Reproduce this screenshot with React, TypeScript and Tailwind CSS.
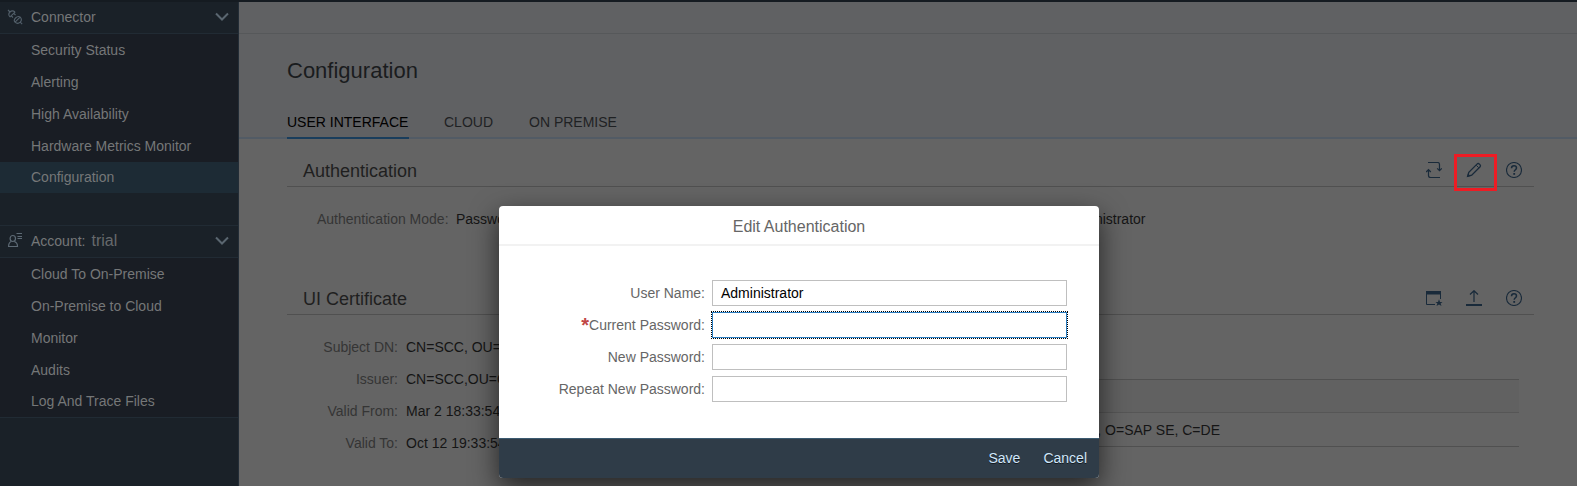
import React from "react";

function Chevron() {
  return (
    <svg width="14" height="10" viewBox="0 0 14 10" className="shrink-0" fill="none" stroke="#5a6670" strokeWidth="2">
      <path d="M1 1.500 L7 7.500 L13 1.500" />
    </svg>
  );
}

function PlugIcon() {
  return (
    <svg width="16" height="16" viewBox="0 0 16 16" className="shrink-0" fill="none" stroke="#53606b" strokeWidth="1.1">
      <path d="M1 1 L3 3 M2.800 8.200 L8.200 2.800 M3 8 C1.500 6.300 1.600 4.300 3 3 C4.300 1.700 6.300 1.600 8 3 M4.300 6.800 L6 8.500 M6.800 4.300 L8.500 6" />
      <path d="M15.200 15.200 L13.200 13.200 M7.800 13.400 L13.400 7.800 M8 13.200 C9.700 14.700 11.800 14.500 13.200 13.200 C14.500 11.800 14.700 9.700 13.200 8 M8 13.200 C6.800 11.800 7 10.500 8.500 9 C10 7.500 11.500 6.900 13.200 8" />
    </svg>
  );
}

function AccountIcon() {
  return (
    <svg width="16" height="16" viewBox="0 0 16 16" className="shrink-0" fill="none" stroke="#5d6a75" strokeWidth="1.2">
      <ellipse cx="5.800" cy="5.500" rx="2.700" ry="3" />
      <path d="M4.300 8.500 C2 9.300 1.600 10.800 1.600 13.500 H10.500 C10.500 10.800 9.600 9.300 7.300 8.500" />
      <path d="M9.500 .5 H15 M10.500 3.500 H15 M10.500 5.500 H15" strokeWidth="1" />
    </svg>
  );
}

function SyncIcon() {
  return (
    <svg width="16" height="16" viewBox="0 0 16 16" fill="none" stroke="#192a3a" strokeWidth="1.2">
      <path d="M2 .5 H11.500 Q13.500 .5 13.500 2.500 V8.500 M11.200 6.300 L13.500 8.700 L15.800 6.300" />
      <path d="M14 15.500 H4.500 Q2.500 15.500 2.500 13.500 V7.800 M.2 10 L2.500 7.600 L4.800 10" />
    </svg>
  );
}

function PencilIcon() {
  return (
    <svg width="16" height="16" viewBox="0 0 16 16" fill="none" stroke="#192a3a" strokeWidth="1.300">
      <path d="M1.600 14.400 L2.800 10.300 L11 2.100 Q12.200 .9 13.400 2.100 L13.900 2.600 Q15.100 3.800 13.900 5 L5.700 13.200 Z" />
      <path d="M10.300 3.300 L12.700 5.700" strokeWidth="1" />
      <path d="M1 15 L2 11.500 L4.500 14 Z" fill="#192a3a" stroke="none" />
    </svg>
  );
}

function HelpIcon() {
  return (
    <svg width="16" height="16" viewBox="0 0 16 16" fill="none" stroke="#192a3a">
      <circle cx="8" cy="8" r="7.500" strokeWidth="1.100" />
      <path d="M5.500 6.200 C5.500 4.600 6.500 3.700 8 3.700 C9.500 3.700 10.500 4.600 10.500 5.900 C10.500 7.800 8.200 7.700 8.200 9.800" strokeWidth="1.500" />
      <rect x="7.300" y="11" width="1.800" height="1.800" fill="#192a3a" stroke="none" />
    </svg>
  );
}

function WindowStarIcon() {
  return (
    <svg width="16" height="16" viewBox="0 0 16 16" fill="none" stroke="#192a3a" className="overflow-visible">
      <path d="M.5 1 V14.500 H9 M14.500 1 V9" />
      <path d="M0 1 H15 V4.500 H0 Z" fill="#192a3a" stroke="none" />
      <path d="M13 9.300 L14 12 H16.500 L14.600 13.500 L15.500 16 L13 14.600 L10.500 16 L11.400 13.500 L9.500 12 H12 Z" fill="#192a3a" stroke="none" />
    </svg>
  );
}

function UploadIcon() {
  return (
    <svg width="16" height="16" viewBox="0 0 16 16" fill="none" stroke="#192a3a">
      <path d="M8 12 V1 M4 4.500 L8 .7 L12 4.500" strokeWidth="1.200" />
      <path d="M0 14 H16 V16 H0 Z" fill="#192a3a" stroke="none" />
    </svg>
  );
}

function NavHeader({ icon, children }: { icon: React.ReactNode; children: React.ReactNode }) {
  return (
    <div className="flex h-8 items-center border-b border-[#212b34] bg-[#1a2128] pb-px pl-[7px] pr-[9px] text-[#757778]">
      {icon}
      <div className="ml-2 flex flex-1 items-baseline">{children}</div>
      <Chevron />
    </div>
  );
}

function NavItem({ label, last, active }: { label: string; last?: boolean; active?: boolean }) {
  return (
    <div className={`flex items-center pl-[31px] ${last ? "h-[31px] pb-[2px]" : "h-8"} ${active ? "bg-[#1d2b35]" : "bg-[#191d24]"}`}>
      {label}
    </div>
  );
}

function Section({ title, children }: { title: string; children: React.ReactNode }) {
  return (
    <div className="ml-12 mr-[43px] flex h-12 items-start justify-between border-b border-[#505050] pl-4 pr-3">
      <h2 className="pt-5 text-[18px] leading-6 text-[#1f1f1f]">{title}</h2>
      <div className="flex gap-6 pt-[23px]">{children}</div>
    </div>
  );
}

function CertRow({ label, value }: { label: string; value: string }) {
  return (
    <div className="flex h-8 items-center">
      <span className="w-[159px] text-right text-[#353535]">{label}</span>
      <span className="ml-2 whitespace-nowrap text-[#151515]">{value}</span>
    </div>
  );
}

function Field({ label, value, required, focused }: { label: string; value?: string; required?: boolean; focused?: boolean }) {
  return (
    <div className="flex h-[26px] items-center">
      <label className="flex w-[206px] items-center justify-end text-[#666666]">
        {required && <span className="h-[22px] text-[20px] font-bold leading-[22px] text-[#c14646]">*</span>}
        {label}
      </label>
      <div
        className={`ml-[7px] flex h-[26px] w-[355px] items-center border bg-white pl-2 text-black ${
          focused ? "border-[#2a7dc0] outline outline-1 outline-dotted outline-black" : "border-[#bfbfbf]"
        }`}
      >
        {value}
      </div>
    </div>
  );
}

export default function App() {
  return (
    <div className="relative flex h-[486px] w-[1577px] flex-col overflow-hidden bg-[#646464] font-['Liberation_Sans',Arial,sans-serif] text-[14px] leading-4">
      <div className="h-[2px] shrink-0 bg-[#151b21]" />
      <div className="flex flex-1">
        <aside className="w-[239px] shrink-0 border-r border-[#232d37] bg-[#1a2128] text-[#757778]">
          <NavHeader icon={<PlugIcon />}>Connector</NavHeader>
          <NavItem label="Security Status" />
          <NavItem label="Alerting" />
          <NavItem label="High Availability" />
          <NavItem label="Hardware Metrics Monitor" />
          <NavItem label="Configuration" last active />
          <div className="h-[33px] border-b border-[#212b34]" />
          <NavHeader icon={<AccountIcon />}>
            Account:<span className="ml-[6px] text-[16px] text-[#66696c]">trial</span>
          </NavHeader>
          <NavItem label="Cloud To On-Premise" />
          <NavItem label="On-Premise to Cloud" />
          <NavItem label="Monitor" />
          <NavItem label="Audits" />
          <NavItem label="Log And Trace Files" last />
          <div className="border-b border-[#212b34]" />
        </aside>

        <main className="flex-1">
          <div className="bg-[#606163]">
            <div className="h-8 border-b border-[#56585a]" />
            <h1 className="h-[72px] pl-12 pt-6 text-[22px] leading-[26px] text-[#1a1c1e]">Configuration</h1>
            <nav className="flex h-[33px] border-b-2 border-[#525b65] pl-12 text-[#1f2123]">
              <span className="mr-[35px] h-[33px] w-[122px] border-b-2 border-[#193d5c] pt-2 text-black">USER INTERFACE</span>
              <span className="mr-9 pt-2">CLOUD</span>
              <span className="pt-2">ON PREMISE</span>
            </nav>
          </div>

          <Section title="Authentication">
            <SyncIcon />
            <span className="relative">
              <PencilIcon />
              <span className="absolute -left-3 -top-2 h-[37px] w-[43px] border-[3px] border-[#ed1c24]" />
            </span>
            <HelpIcon />
          </Section>
          <div className="flex h-20 pl-[78px] pt-6 text-[#151515]">
            <span className="w-[139px] text-[#353535]">Authentication Mode:</span>
            <span className="w-[607px]">Password</span>
            <span>Administrator</span>
          </div>

          <Section title="UI Certificate">
            <WindowStarIcon />
            <UploadIcon />
            <HelpIcon />
          </Section>
          <div className="flex pt-4">
            <div className="w-[560px] shrink-0">
              <CertRow label="Subject DN:" value="CN=SCC, OU=Connector" />
              <CertRow label="Issuer:" value="CN=SCC,OU=Connector" />
              <CertRow label="Valid From:" value="Mar 2 18:33:54 2017" />
              <CertRow label="Valid To:" value="Oct 12 19:33:54 2017" />
            </div>
            <div className="mt-12 h-[68px] w-[720px] border-y border-[#505050]">
              <div className="h-[33px] border-b border-[#565656] bg-[#616161]" />
              <div className="flex h-[33px] items-center justify-end pr-[299px] text-[#151515]">OU=Connector, O=SAP SE, C=DE</div>
            </div>
          </div>
        </main>
      </div>

      <div
        role="dialog"
        className="absolute left-[499px] top-[206px] flex h-[272px] w-[600px] flex-col overflow-hidden rounded bg-white shadow-[0_10px_28px_rgba(0,0,0,0.65)]"
      >
        <div className="flex h-10 items-center justify-center border-b-2 border-[#f2f2f2] pt-[4px] text-[16px] text-[#666666]">
          Edit Authentication
        </div>
        <div className="flex flex-1 flex-col gap-[6px] pt-[34px]">
          <Field label="User Name:" value="Administrator" />
          <Field label="Current Password:" required focused />
          <Field label="New Password:" />
          <Field label="Repeat New Password:" />
        </div>
        <div className="flex h-10 items-center justify-end gap-[23px] border-t border-[#3b5a70] bg-[#2f3c48] pb-[2px] pr-3 text-[#d0e6fa] [text-shadow:0_1px_0_rgba(0,0,0,0.6)]">
          <span>Save</span>
          <span>Cancel</span>
        </div>
      </div>
    </div>
  );
}
